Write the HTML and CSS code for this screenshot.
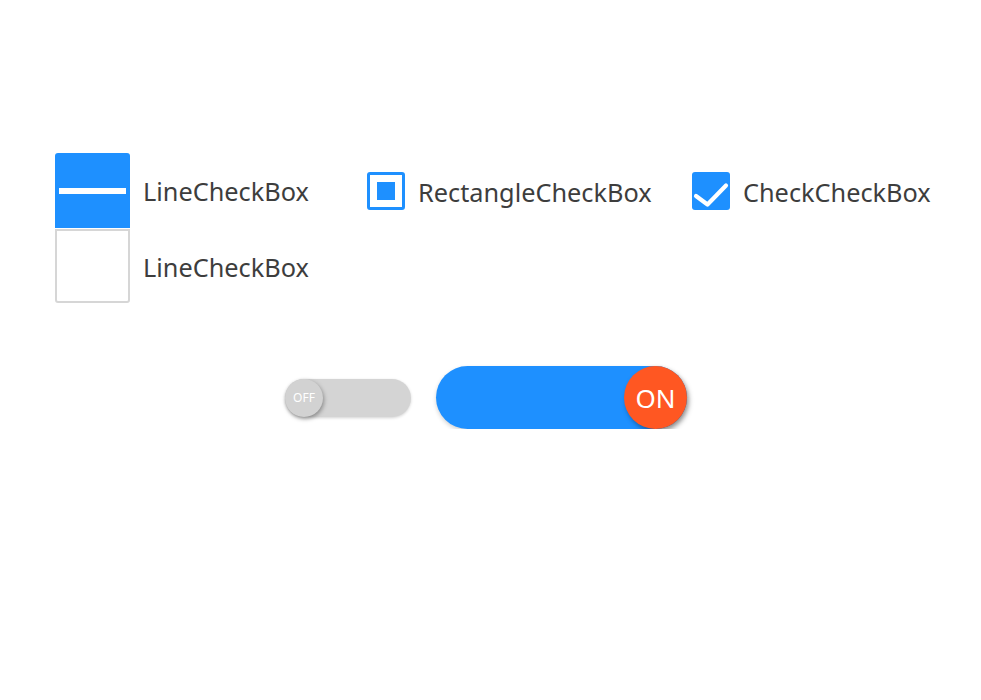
FILE: index.html
```html
<!DOCTYPE html>
<html>
<head>
<meta charset="utf-8">
<link rel="stylesheet" href="styles.css">
</head>
<body>
<div class="page">
  <div class="checks">
    <div class="group group-line">
      <div class="item">
        <span class="line-box on"><span class="bar"></span></span>
        <span class="label">LineCheckBox</span>
      </div>
      <div class="item second">
        <span class="line-box off"></span>
        <span class="label">LineCheckBox</span>
      </div>
    </div>
    <div class="group group-rect">
      <div class="item small">
        <span class="rect-box"><span class="dot"></span></span>
        <span class="label">RectangleCheckBox</span>
      </div>
    </div>
    <div class="group group-check">
      <div class="item small">
        <span class="check-box">
          <svg width="38" height="38" viewBox="0 0 38 38"><path d="M4 24 L15.5 32.5 L34 13.5" fill="none" stroke="#fff" stroke-width="4.2" stroke-linecap="round" stroke-linejoin="round"/></svg>
        </span>
        <span class="label">CheckCheckBox</span>
      </div>
    </div>
  </div>
  <div class="toggles">
    <div class="toggle toggle-off"><span class="knob">OFF</span></div>
    <div class="toggle toggle-on"><span class="knob">ON</span></div>
  </div>
</div>
</body>
</html>
```
FILE: styles.css
```css
html, body {
  margin: 0;
  padding: 0;
  background: #fff;
}
body {
  font-family: "Noto Sans", "Open Sans", sans-serif;
  color: #3d3d3d;
}
.page {
  padding: 153px 0 0 55px;
}
.checks {
  display: flex;
  align-items: flex-start;
}
.group-line { width: 312px; }
.group-rect { width: 325px; padding-top: 19px; }
.group-check { padding-top: 19px; }
.item {
  display: flex;
  align-items: center;
}
.item.second { margin-top: 1px; }
.label {
  font-size: 25.3px;
  margin-left: 13px;
  line-height: 30px;
  padding-top: 1px;
}
.line-box {
  box-sizing: border-box;
  width: 75px;
  height: 75px;
  display: flex;
  align-items: center;
  justify-content: center;
}
.line-box.on {
  background: #1e90ff;
  border-radius: 3px 3px 0 0;
}
.line-box.on .bar {
  width: 67px;
  height: 6px;
  background: #fff;
}
.line-box.off {
  border: 2px solid #d6d6d6;
  border-radius: 0 0 3px 3px;
  height: 74px;
}
.rect-box {
  box-sizing: border-box;
  width: 38px;
  height: 38px;
  border: 3px solid #1e90ff;
  border-radius: 3px;
  display: flex;
  align-items: center;
  justify-content: center;
}
.rect-box .dot {
  width: 18px;
  height: 18px;
  background: #1e90ff;
}
.check-box {
  width: 38px;
  height: 38px;
  background: #1e90ff;
  border-radius: 3px;
  display: block;
  overflow: hidden;
}
.check-box svg { display: block; }
.toggles {
  display: flex;
  align-items: center;
  gap: 25px;
  margin: 63px 0 0 230px;
}
.toggle {
  position: relative;
  box-sizing: border-box;
  display: flex;
  align-items: center;
}
.toggle-off {
  width: 126px;
  height: 38px;
  border-radius: 19px;
  background: #d4d4d4;
  box-shadow: 0 1px 3px rgba(0,0,0,0.18);
}
.toggle-off .knob {
  width: 38px;
  height: 38px;
  border-radius: 50%;
  background: #d2d2d2;
  box-shadow: 1px 2px 4px rgba(0,0,0,0.35);
  color: #fff;
  font-size: 12px;
  display: flex;
  align-items: center;
  justify-content: center;
}
.toggle-on {
  width: 251px;
  height: 63px;
  border-radius: 32px;
  background: #1e90ff;
  box-shadow: 0 2px 4px rgba(0,0,0,0.18);
  justify-content: flex-end;
}
.toggle-on .knob {
  width: 63px;
  height: 63px;
  border-radius: 50%;
  background: #ff5722;
  box-shadow: 2px 3px 5px rgba(0,0,0,0.35);
  color: #fff;
  font-size: 26px;
  display: flex;
  align-items: center;
  justify-content: center;
}
```
